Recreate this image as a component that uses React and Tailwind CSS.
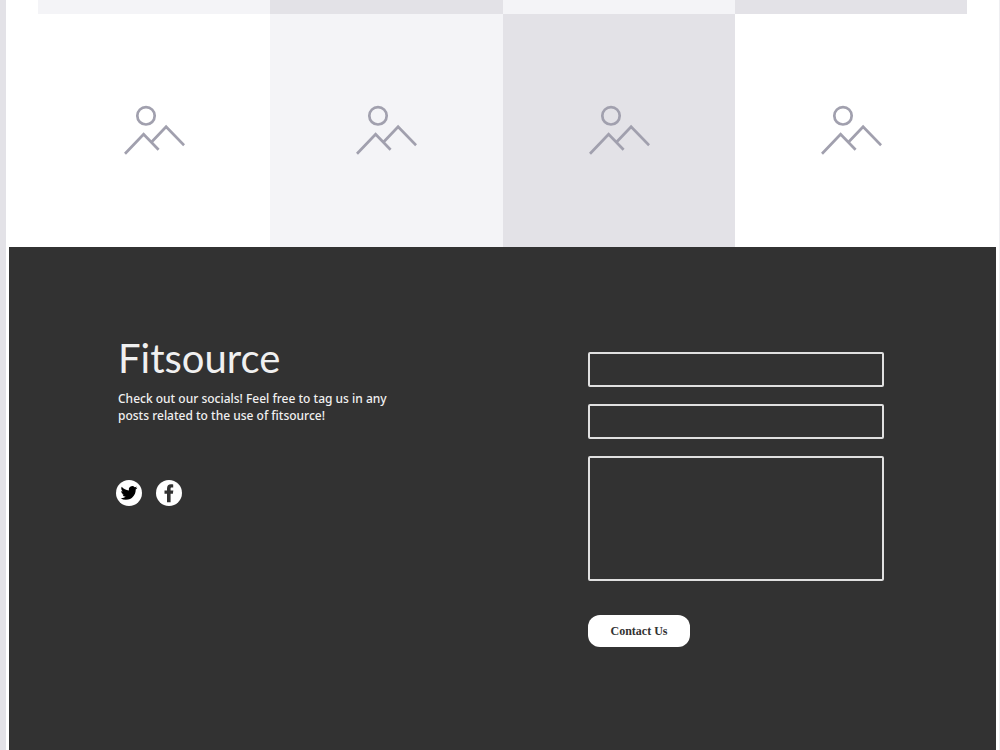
import React from "react";

const topRow = ["bg-[#f4f4f7]", "bg-[#e3e2e7]", "bg-[#f4f4f7]", "bg-[#e3e2e7]"];
const tiles = ["bg-white", "bg-[#f4f4f7]", "bg-[#e3e2e7]", "bg-white"];

function PictureIcon() {
  return (
    <svg
      className="h-[50px] w-[62px]"
      viewBox="0 0 62 50"
      fill="none"
      stroke="#a1a0ae"
      strokeWidth="2.7"
      aria-hidden="true"
    >
      <circle cx="23" cy="10.8" r="8.7" />
      <path d="M2 48.7 20.6 29.3 35.6 44.8" />
      <path d="M28.6 37 43.1 21.7 61.1 40.2" />
    </svg>
  );
}

function TwitterIcon() {
  return (
    <svg className="size-[26px]" viewBox="0 0 26 26" aria-hidden="true">
      <circle cx="13" cy="13" r="13" fill="#fff" />
      <path
        transform="translate(4.6 4.6) scale(.7)"
        fill="#000"
        d="M23.953 4.57a10 10 0 01-2.825.775 4.958 4.958 0 002.163-2.723c-.951.555-2.005.959-3.127 1.184a4.92 4.92 0 00-8.384 4.482C7.69 8.095 4.067 6.13 1.64 3.162a4.822 4.822 0 00-.666 2.475c0 1.71.87 3.213 2.188 4.096a4.904 4.904 0 01-2.228-.616v.06a4.923 4.923 0 003.946 4.827 4.996 4.996 0 01-2.212.085 4.936 4.936 0 004.604 3.417 9.867 9.867 0 01-6.102 2.105c-.39 0-.779-.023-1.17-.067a13.995 13.995 0 007.557 2.209c9.053 0 13.998-7.496 13.998-13.985 0-.21 0-.42-.015-.63A9.935 9.935 0 0024 4.59z"
      />
    </svg>
  );
}

function FacebookIcon() {
  return (
    <svg className="size-[26px]" viewBox="0 0 26 26" aria-hidden="true">
      <circle cx="13" cy="13" r="13" fill="#fff" />
      <path
        fill="#323232"
        d="M11 22.3v-8.5H8.5v-3.3H11V8.6C11 5.8 12.4 4.3 15 4.3c1 0 1.8.1 2.2.2v3h-1.4c-1 0-1.2.5-1.2 1.3v1.7h2.7l-.4 3.3h-2.3v8.5z"
      />
    </svg>
  );
}

const field =
  "block w-full rounded-xs border-2 border-[#e0e0e0] bg-transparent px-2 text-sm text-white outline-none";

export default function App() {
  return (
    <div className="flex min-h-screen flex-col border-r border-l-6 border-r-[#eeeef1] border-l-[#e3e2e7] bg-white px-[3px]">
      <main className="px-[29px]">
        <div className="grid grid-cols-4">
          {topRow.map((color, i) => (
            <div key={i} className={`h-[14px] ${color}`} />
          ))}
          {tiles.map((color, i) => (
            <div
              key={i}
              className={`flex h-[233px] items-center justify-center pb-0.5 ${color}`}
            >
              <PictureIcon />
            </div>
          ))}
        </div>
      </main>

      <footer className="flex grow items-start justify-between bg-[#323232] pt-[87px] pr-28 pb-24 pl-[109px] text-white">
        <section className="w-72">
          <h2 className="font-['Lato',sans-serif] text-[40px] leading-[48px] font-normal text-[#f0f0f0]">
            Fitsource
          </h2>
          <p className="mt-2 font-['Noto_Sans',sans-serif] text-[12px] leading-[17px] font-medium text-[#f0f0f0]">
            Check out our socials! Feel free to tag us in any posts related to
            the use of fitsource!
          </p>
          <nav className="-ml-0.5 mt-14 flex gap-3.5" aria-label="Social media">
            <a href="#twitter" aria-label="Twitter">
              <TwitterIcon />
            </a>
            <a href="#facebook" aria-label="Facebook">
              <FacebookIcon />
            </a>
          </nav>
        </section>

        <form
          className="mt-[18px] w-[296px]"
          onSubmit={(e) => e.preventDefault()}
        >
          <div className="flex flex-col gap-[17px]">
            <input
              type="text"
              name="name"
              aria-label="Name"
              className={`h-[35px] ${field}`}
            />
            <input
              type="email"
              name="email"
              aria-label="Email"
              className={`h-[35px] ${field}`}
            />
            <textarea
              name="message"
              aria-label="Message"
              className={`h-[125px] resize-none ${field}`}
            />
          </div>
          <button
            type="submit"
            className="mt-[34px] h-8 w-[102px] rounded-xl bg-white font-['Liberation_Serif',serif] text-[12px] font-bold text-[#323232]"
          >
            Contact Us
          </button>
        </form>
      </footer>
    </div>
  );
}
